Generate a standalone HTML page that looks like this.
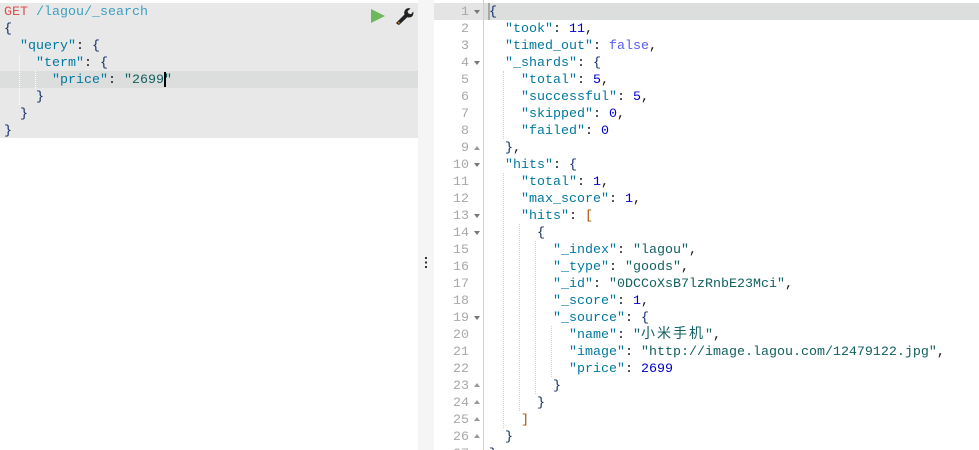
<!DOCTYPE html>
<html><head><meta charset="utf-8">
<style>
html,body{margin:0;padding:0;background:#fff;width:979px;height:450px;overflow:hidden}
body{position:relative;font-family:"Liberation Mono","Noto Sans CJK SC",monospace;font-size:13.334px;line-height:17px;color:#333}
.a{position:absolute}
.l{position:absolute;white-space:pre;height:17px;padding-top:1px}
.k{color:#00789f}.s{color:#12605f}.n{color:#0000cd}.b{color:#0b2a66}.o{color:#a85000}.p{color:#111}
.c{font-size:14px;letter-spacing:2px;line-height:17px}
.g{position:absolute;left:434px;width:35px;text-align:right;color:#a8a8a8;white-space:pre;height:17px;padding-top:1px}
.d{position:absolute;width:0;border-left:1px dotted #cfcfcf}
.w{border-left:1px dotted #fff}
.u,.v{position:absolute;left:474px;width:0;height:0;border-left:3px solid transparent;border-right:3px solid transparent}
.u{border-top:4px solid #777}.v{border-bottom:4px solid #999}
</style></head><body>
<div class="a" style="left:0;top:3px;width:418px;height:135px;background:#e8e8e8"></div>
<div class="a" style="left:0;top:71px;width:418px;height:17px;background:#dcdddd"></div>
<div class="a" style="left:418px;top:0;width:16px;height:450px;background:#f5f5f5"></div>
<div class="a" style="left:434px;top:3px;width:49px;height:17px;background:#e4e4e4"></div>
<div class="a" style="left:484px;top:3px;width:495px;height:17px;background:#dcdddd"></div>
<div class="a" style="left:483px;top:0;width:1px;height:450px;background:#d0d0d0"></div>
<div class="a" style="left:488px;top:3px;width:2px;height:17px;background:#a8a8a8"></div>

<div class="d w" style="left:19px;top:54px;height:51px"></div>
<div class="d w" style="left:35px;top:71px;height:17px"></div>

<div class="l" style="left:4px;top:3px"><span style="color:#d9534f">GET</span> <span style="color:#3d9fc0">/lagou/_search</span></div>
<div class="l b" style="left:4px;top:20px">{</div>
<div class="l" style="left:4px;top:37px">  <span class="k">"query"</span><span class="p">:</span> <span class="b">{</span></div>
<div class="l" style="left:4px;top:54px">    <span class="k">"term"</span><span class="p">:</span> <span class="b">{</span></div>
<div class="l" style="left:4px;top:71px">      <span class="k">"price"</span><span class="p">:</span> <span class="s">"2699"</span></div>
<div class="l b" style="left:4px;top:88px">    }</div>
<div class="l b" style="left:4px;top:105px">  }</div>
<div class="l b" style="left:4px;top:122px">}</div>
<div class="a" style="left:164px;top:72px;width:1.5px;height:15px;background:#000"></div>

<svg class="a" style="left:368px;top:6px" width="48" height="20" viewBox="0 0 48 20">
<path d="M3 3L17 10L3 17Z" fill="#6cb85c"/>
<path d="M29 18L28 17L36.500 8.500C35.800 6 36.500 4 38.500 2.700C39.800 2 41 2 42.500 2.500L39.500 5.200L40.500 7.500L43 8.300L45.200 5.500C45.700 7.500 45.300 9.300 44 10.500C42.500 11.500 41 11.700 39.300 11.300L31 19Z" fill="#222"/>
<circle cx="30.800" cy="16.800" r="1" fill="#c77a2a"/>
</svg>

<svg class="a" style="left:424px;top:256px" width="4" height="13" viewBox="0 0 4 13"><rect x="1" y="1" width="2" height="2" fill="#333"/><rect x="1" y="5.500" width="2" height="2" fill="#333"/><rect x="1" y="10" width="2" height="2" fill="#333"/></svg>

<div class="d" style="left:503px;top:71px;height:68px"></div>
<div class="d" style="left:503px;top:173px;height:255px"></div>
<div class="d" style="left:519px;top:224px;height:187px"></div>
<div class="d" style="left:535px;top:241px;height:153px"></div>
<div class="d" style="left:551px;top:326px;height:51px"></div>

<div class="g" style="top:3px">1</div><div class="g" style="top:20px">2</div><div class="g" style="top:37px">3</div><div class="g" style="top:54px">4</div><div class="g" style="top:71px">5</div><div class="g" style="top:88px">6</div><div class="g" style="top:105px">7</div><div class="g" style="top:122px">8</div><div class="g" style="top:139px">9</div><div class="g" style="top:156px">10</div><div class="g" style="top:173px">11</div><div class="g" style="top:190px">12</div><div class="g" style="top:207px">13</div><div class="g" style="top:224px">14</div><div class="g" style="top:241px">15</div><div class="g" style="top:258px">16</div><div class="g" style="top:275px">17</div><div class="g" style="top:292px">18</div><div class="g" style="top:309px">19</div><div class="g" style="top:326px">20</div><div class="g" style="top:343px">21</div><div class="g" style="top:360px">22</div><div class="g" style="top:377px">23</div><div class="g" style="top:394px">24</div><div class="g" style="top:411px">25</div><div class="g" style="top:428px">26</div><div class="g" style="top:445px">27</div>

<div class="u" style="top:10px"></div><div class="u" style="top:61px"></div><div class="v" style="top:146px"></div><div class="u" style="top:163px"></div><div class="u" style="top:214px"></div><div class="u" style="top:231px"></div><div class="u" style="top:316px"></div><div class="v" style="top:383px"></div><div class="v" style="top:400px"></div><div class="v" style="top:417px"></div><div class="v" style="top:434px"></div>

<div class="l b" style="left:489px;top:3px">{</div>
<div class="l" style="left:489px;top:20px">  <span class="k">"took"</span><span class="p">:</span> <span class="n">11</span><span class="p">,</span></div>
<div class="l" style="left:489px;top:37px">  <span class="k">"timed_out"</span><span class="p">:</span> <span style="color:#585cf6">false</span><span class="p">,</span></div>
<div class="l" style="left:489px;top:54px">  <span class="k">"_shards"</span><span class="p">:</span> <span class="b">{</span></div>
<div class="l" style="left:489px;top:71px">    <span class="k">"total"</span><span class="p">:</span> <span class="n">5</span><span class="p">,</span></div>
<div class="l" style="left:489px;top:88px">    <span class="k">"successful"</span><span class="p">:</span> <span class="n">5</span><span class="p">,</span></div>
<div class="l" style="left:489px;top:105px">    <span class="k">"skipped"</span><span class="p">:</span> <span class="n">0</span><span class="p">,</span></div>
<div class="l" style="left:489px;top:122px">    <span class="k">"failed"</span><span class="p">:</span> <span class="n">0</span></div>
<div class="l" style="left:489px;top:139px">  <span class="b">}</span><span class="p">,</span></div>
<div class="l" style="left:489px;top:156px">  <span class="k">"hits"</span><span class="p">:</span> <span class="b">{</span></div>
<div class="l" style="left:489px;top:173px">    <span class="k">"total"</span><span class="p">:</span> <span class="n">1</span><span class="p">,</span></div>
<div class="l" style="left:489px;top:190px">    <span class="k">"max_score"</span><span class="p">:</span> <span class="n">1</span><span class="p">,</span></div>
<div class="l" style="left:489px;top:207px">    <span class="k">"hits"</span><span class="p">:</span> <span class="o">[</span></div>
<div class="l b" style="left:489px;top:224px">      {</div>
<div class="l" style="left:489px;top:241px">        <span class="k">"_index"</span><span class="p">:</span> <span class="s">"lagou"</span><span class="p">,</span></div>
<div class="l" style="left:489px;top:258px">        <span class="k">"_type"</span><span class="p">:</span> <span class="s">"goods"</span><span class="p">,</span></div>
<div class="l" style="left:489px;top:275px">        <span class="k">"_id"</span><span class="p">:</span> <span class="s">"0DCCoXsB7lzRnbE23Mci"</span><span class="p">,</span></div>
<div class="l" style="left:489px;top:292px">        <span class="k">"_score"</span><span class="p">:</span> <span class="n">1</span><span class="p">,</span></div>
<div class="l" style="left:489px;top:309px">        <span class="k">"_source"</span><span class="p">:</span> <span class="b">{</span></div>
<div class="l" style="left:489px;top:326px">          <span class="k">"name"</span><span class="p">:</span> <span class="s">"<span class="c">小米手机</span>"</span><span class="p">,</span></div>
<div class="l" style="left:489px;top:343px">          <span class="k">"image"</span><span class="p">:</span> <span class="s">"http://image.lagou.com/12479122.jpg"</span><span class="p">,</span></div>
<div class="l" style="left:489px;top:360px">          <span class="k">"price"</span><span class="p">:</span> <span class="n">2699</span></div>
<div class="l b" style="left:489px;top:377px">        }</div>
<div class="l b" style="left:489px;top:394px">      }</div>
<div class="l o" style="left:489px;top:411px">    ]</div>
<div class="l b" style="left:489px;top:428px">  }</div>
<div class="l b" style="left:489px;top:445px">}</div>
</body></html>
